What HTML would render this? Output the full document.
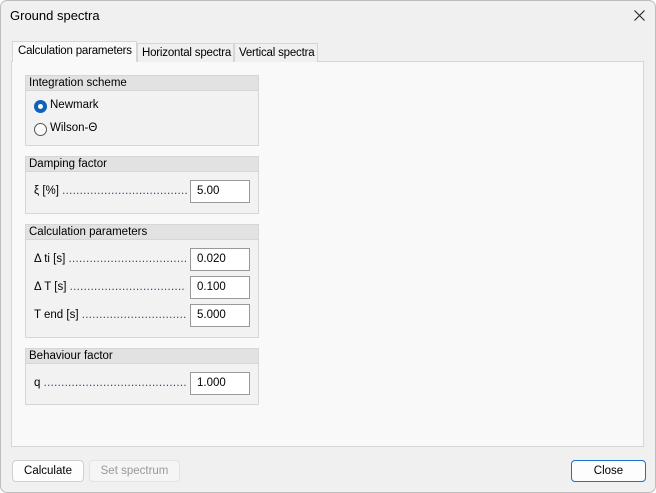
<!DOCTYPE html>
<html><head><style>
*{box-sizing:border-box;margin:0;padding:0}
body{width:656px;height:493px;overflow:hidden;background:#fff;font-family:"Liberation Sans",sans-serif;font-size:11.5px;color:#000;position:relative}
.win{position:absolute;left:0;top:0;width:656px;height:493px;background:#f0f0f0;border:1px solid #bdbdbd;border-radius:7px}
.abs{position:absolute;white-space:nowrap}
.title{left:10px;top:8px;font-size:13px}
.panel{left:11px;top:61px;width:633px;height:386px;background:#f9f9f9;border:1px solid #d6d6d6}
.tab{top:43px;height:19px;border:1px solid #d6d6d6;border-bottom:none;background:#f0f0f0;padding:3px 0 0 4px;font-size:11.5px;letter-spacing:-0.2px}
.tab.act{top:41px;height:21px;background:#f9f9f9;padding:3px 0 0 5px}
.grp{left:25px;width:234px;border:1px solid #d6d6d6;background:#f2f2f2}
.gh{height:15px;background:#e2e2e2;border-bottom:1px solid #d6d6d6;padding-left:3px;line-height:14px}
.row{position:absolute;left:8px;width:216px;white-space:nowrap;overflow:hidden;color:#000}
.dots{color:#3a3a7a;letter-spacing:0.3px}
.inp{position:absolute;left:164px;width:60px;height:23px;background:#fff;border:1px solid #999;padding:4px 0 0 6px}
.btn{top:460px;height:22px;border:1px solid #cfcfcf;border-radius:4px;background:#fdfdfd;text-align:center;line-height:20px}
.radio{position:absolute;left:8px;width:13px;height:13px;border-radius:50%}
</style></head><body>
<div class="win"></div>
<div class="abs title">Ground spectra</div>
<svg class="abs" style="left:634px;top:10px" width="11" height="11"><path d="M0.5 0.5L10.5 10.5M10.5 0.5L0.5 10.5" stroke="#222" stroke-width="1.1"/></svg>
<div class="abs panel"></div>
<div class="abs tab act" style="left:12px;width:125px">Calculation parameters</div>
<div class="abs tab" style="left:137px;width:97px">Horizontal spectra</div>
<div class="abs tab" style="left:234px;width:84px">Vertical spectra</div>

<div class="abs grp" style="top:75px;height:71px"><div class="gh">Integration scheme</div>
<div class="radio" style="top:24px;background:#0e62b8"><div style="position:absolute;left:4px;top:4px;width:5px;height:5px;border-radius:50%;background:#fff"></div></div>
<div class="abs" style="left:24px;top:23px">Newmark</div>
<div class="radio" style="top:47px;border:1px solid #555;background:#fafafa"></div>
<div class="abs" style="left:24px;top:46px">Wilson-Θ</div>
</div>

<div class="abs grp" style="top:156px;height:58px"><div class="gh">Damping factor</div>
<div class="row" style="top:28px;width:155px">ξ [%] <span class="dots">..............................................................</span></div>
<div class="inp" style="top:23px">5.00</div></div>

<div class="abs grp" style="top:224px;height:114px"><div class="gh">Calculation parameters</div>
<div class="row" style="top:28px;width:152px">Δ ti [s] <span class="dots">..............................................................</span></div>
<div class="inp" style="top:23px">0.020</div>
<div class="row" style="top:56px;width:152px">Δ T [s] <span class="dots">..............................................................</span></div>
<div class="inp" style="top:51px">0.100</div>
<div class="row" style="top:84px;width:152px">T end [s] <span class="dots">..............................................................</span></div>
<div class="inp" style="top:79px">5.000</div></div>

<div class="abs grp" style="top:348px;height:57px"><div class="gh">Behaviour factor</div>
<div class="row" style="top:28px;width:152px">q <span class="dots">..............................................................</span></div>
<div class="inp" style="top:23px">1.000</div></div>

<div class="abs btn" style="left:12px;width:72px">Calculate</div>
<div class="abs btn" style="left:89px;width:91px;color:#999;background:#f5f5f5;border-color:#e3e3e3">Set spectrum</div>
<div class="abs btn" style="left:571px;width:75px;border-color:#1a6fc8">Close</div>
</body></html>
